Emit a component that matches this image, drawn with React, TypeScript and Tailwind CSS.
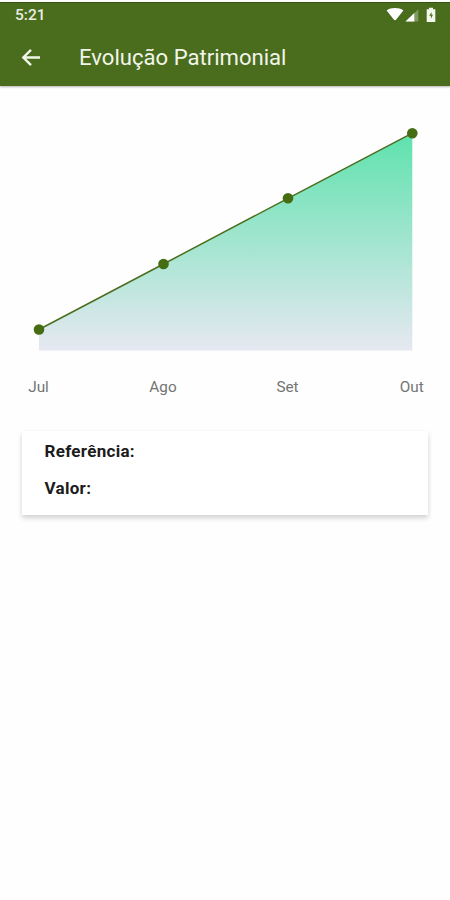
interface Point {
  label: string;
  x: number;
  y: number;
}

const points: Point[] = [
  { label: "Jul", x: 39, y: 329.5 },
  { label: "Ago", x: 163.5, y: 264 },
  { label: "Set", x: 288, y: 198.3 },
  { label: "Out", x: 412.3, y: 133.2 },
];

const BASELINE = 350.5;

function StatusBar() {
  return (
    <div className="flex h-6 items-center justify-between pl-[15px] pr-3.5 text-[#e9eee0]">
      <span className="pt-0.5 text-[15.5px] leading-none font-medium">5:21</span>
      <svg width="50" height="16" viewBox="386 6 50 16" fill="none">
        <path d="M386.6 9.4 C391 6.2 399 6.2 403.4 9.4 L396.2 18.6 Q395 19.8 393.8 18.6 Z" fill="#fff" />
        <path d="M405.5 20.5 L418.3 8.3 V20.5 Z" fill="#fff" fillOpacity="0.3" />
        <path d="M405.5 20.5 L414.3 12.1 V20.5 Z" fill="#fff" />
        <path d="M429 6.8 h4 v1.5 h2.3 v12.7 h-8.6 v-12.7 h2.3 Z" fill="#f4f7ee" />
        <path d="M431.6 10.9 L429.2 14.7 h1.7 v3 L433 13.8 h-1.5 Z" fill="#4a6c1d" />
      </svg>
    </div>
  );
}

function Header() {
  return (
    <header className="mt-0.5 h-[84px] bg-[#4a6c1d] border-t border-[#345416] shadow-[0_1px_2px_rgba(0,0,0,0.3)]">
      <StatusBar />
      <div className="flex h-[61px] items-center pl-[21px]">
        <button type="button" aria-label="Voltar" className="w-[58px]">
          <svg width="20" height="20" viewBox="0 0 20 20" fill="none" stroke="#f1f5ea" strokeWidth="2.4">
            <path d="M19 9.5 H2.8 M10 1.8 L2.3 9.5 L10 17.2" />
          </svg>
        </button>
        <h1 className="text-[22.1px] leading-none text-[#f1f5ea]">Evolução Patrimonial</h1>
      </div>
    </header>
  );
}

function EvolutionChart() {
  const line = points.map((p) => `${p.x},${p.y}`).join(" ");
  const first = points[0];
  const last = points[points.length - 1];

  return (
    <svg width="450" height="345" viewBox="0 86 450 345" className="block">
      <defs>
        <linearGradient id="area" x1="0" y1="0" x2="0" y2="1">
          <stop offset="0" stopColor="#5ee2ae" />
          <stop offset="1" stopColor="#e6e8f1" />
        </linearGradient>
      </defs>
      <polygon points={`${first.x},${BASELINE} ${line} ${last.x},${BASELINE}`} fill="url(#area)" />
      <polyline points={line} fill="none" stroke="#4b6e1e" strokeWidth="1.5" />
      {points.map((p) => (
        <g key={p.label}>
          <circle cx={p.x} cy={p.y} r="5.3" fill="#456d12" />
          <text x={p.x - 0.5} y="392" textAnchor="middle" fontSize="15.3" fill="#747474">
            {p.label}
          </text>
        </g>
      ))}
    </svg>
  );
}

function DetailsCard() {
  return (
    <section className="mx-[22px] flex h-[84px] flex-col gap-[19px] bg-white pl-[22.5px] pt-[11px] text-[17px] leading-[18px] font-bold tracking-[0.3px] text-[#1c1c1c] shadow-[0_3px_5px_rgba(0,0,0,0.18)]">
      <p>Referência:</p>
      <p>Valor:</p>
    </section>
  );
}

export default function App() {
  return (
    <div className="flex h-[900px] w-[450px] flex-col overflow-hidden bg-[#fefefe] font-['Roboto',sans-serif]">
      <Header />
      <main>
        <EvolutionChart />
        <DetailsCard />
      </main>
    </div>
  );
}
